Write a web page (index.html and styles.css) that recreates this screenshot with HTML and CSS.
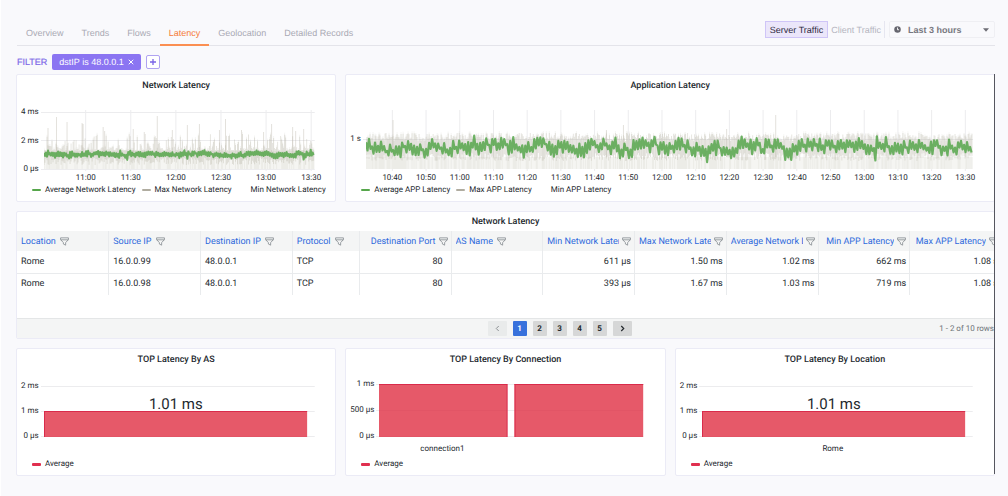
FILE: index.html
```html
<!DOCTYPE html>
<html lang="en">
<head>
<meta charset="utf-8">
<title>Latency</title>
<link rel="stylesheet" href="styles.css">
</head>
<body>
<svg class="defs" width="0" height="0" aria-hidden="true">
  <symbol id="funnel" viewBox="0 0 16 16"><path d="M1 1.500h14v3L10 10v4.500l-4-2V10L1 4.500zM1 5h14" fill="none" stroke="currentColor" stroke-width="1.500" stroke-linejoin="round"/></symbol>
</svg>
<header class="topbar">
  <nav class="tabs">
    <a href="#">Overview</a>
    <a href="#">Trends</a>
    <a href="#">Flows</a>
    <a href="#" class="active" aria-current="page">Latency</a>
    <a href="#">Geolocation</a>
    <a href="#">Detailed Records</a>
  </nav>
  <div class="controls">
    <button class="traffic selected">Server Traffic</button>
    <button class="traffic">Client Traffic</button>
    <div class="range">
      <svg class="clock" viewBox="0 0 14 14" aria-hidden="true"><circle cx="7" cy="7" r="6.500" fill="#66666f"/><path d="M7 3v4.500h3" fill="none" stroke="#fff" stroke-width="1.800"/></svg>
      <select aria-label="Time range"><option>Last 3 hours</option></select>
      <svg class="caret" viewBox="0 0 10 6" aria-hidden="true"><path d="M0 0h10L5 6z" fill="#6d6d75"/></svg>
    </div>
  </div>
</header>

<div class="filters">
  <span class="filter-title">FILTER</span>
  <button class="chip">dstIP is 48.0.0.1
    <svg viewBox="0 0 8 8" aria-hidden="true"><path d="M1 1l6 6M7 1L1 7" stroke="currentColor" stroke-width="1.300"/></svg>
  </button>
  <button class="add" aria-label="Add filter"><svg viewBox="0 0 8 8" aria-hidden="true"><path d="M4 1v6M1 4h6" stroke="currentColor" stroke-width="1.300"/></svg></button>
</div>

<main class="board">
  <section class="card">
    <h2>Network Latency</h2>
    <div class="chart">
      <div class="yaxis"><span>4 ms</span><span>2 ms</span><span>0 µs</span></div>
      <svg class="plot" id="network"></svg>
    </div>
    <div class="legend">
      <span class="key green">Average Network Latency</span>
      <span class="key grey">Max Network Latency</span>
      <span class="key">Min Network Latency</span>
    </div>
  </section>

  <section class="card wide">
    <h2>Application Latency</h2>
    <div class="chart">
      <div class="yaxis single"><span>1 s</span></div>
      <svg class="plot" id="application"></svg>
    </div>
    <div class="legend">
      <span class="key green">Average APP Latency</span>
      <span class="key grey">Max APP Latency</span>
      <span class="key">Min APP Latency</span>
    </div>
  </section>

  <section class="card full">
    <h2>Network Latency</h2>
    <div class="table-area">
    <table>
      <colgroup><col><col><col><col class="narrow"><col><col><col><col><col><col><col></colgroup>
      <thead>
        <tr>
          <th><div><span>Location</span><svg><use href="#funnel"/></svg></div></th>
          <th><div><span>Source IP</span><svg><use href="#funnel"/></svg></div></th>
          <th><div><span>Destination IP</span><svg><use href="#funnel"/></svg></div></th>
          <th><div><span>Protocol</span><svg><use href="#funnel"/></svg></div></th>
          <th class="num"><div><span>Destination Port</span><svg><use href="#funnel"/></svg></div></th>
          <th><div><span>AS Name</span><svg><use href="#funnel"/></svg></div></th>
          <th class="num"><div><span>Min Network Latency</span><svg><use href="#funnel"/></svg></div></th>
          <th class="num"><div><span>Max Network Latency</span><svg><use href="#funnel"/></svg></div></th>
          <th class="num"><div><span>Average Network Latency</span><svg><use href="#funnel"/></svg></div></th>
          <th class="num"><div><span>Min APP Latency</span><svg><use href="#funnel"/></svg></div></th>
          <th class="num"><div><span>Max APP Latency</span><svg><use href="#funnel"/></svg></div></th>
        </tr>
      </thead>
      <tbody>
        <tr><td>Rome</td><td>16.0.0.99</td><td>48.0.0.1</td><td>TCP</td><td class="num port">80</td><td></td><td class="num">611 µs</td><td class="num">1.50 ms</td><td class="num">1.02 ms</td><td class="num">662 ms</td><td class="num">1.08 s</td></tr>
        <tr><td>Rome</td><td>16.0.0.98</td><td>48.0.0.1</td><td>TCP</td><td class="num port">80</td><td></td><td class="num">393 µs</td><td class="num">1.67 ms</td><td class="num">1.03 ms</td><td class="num">719 ms</td><td class="num">1.08 s</td></tr>
      </tbody>
    </table>
    </div>
    <footer class="pager">
      <div class="pages">
        <button class="step" disabled aria-label="Previous page"><svg viewBox="0 0 6 8"><path d="M4.500 1L1.500 4l3 3" fill="none" stroke="currentColor" stroke-width="1.200"/></svg></button>
        <button class="current">1</button>
        <button>2</button>
        <button>3</button>
        <button>4</button>
        <button>5</button>
        <button class="step" aria-label="Next page"><svg viewBox="0 0 6 8"><path d="M1.500 1l3 3-3 3" fill="none" stroke="currentColor" stroke-width="1.400"/></svg></button>
      </div>
      <span class="count">1 - 2 of 10 rows</span>
    </footer>
  </section>

  <section class="card">
    <h2>TOP Latency By AS</h2>
    <div class="chart">
      <div class="yaxis bars"><span>2 ms</span><span>1 ms</span><span>0 µs</span></div>
      <svg class="plot">
        <path class="grid" d="M-3 5.500H0M-3 30.500H0M-3 55.500H0"/>
        <rect class="gridbar" y="5" width="100%" height="1"/><rect class="gridbar" y="30" width="100%" height="1"/><rect class="gridbar" y="55" width="100%" height="1"/>
        <rect class="bar" y="30" width="97.2%" height="26"/><rect class="edge" y="30" width="97.2%" height="1"/><rect class="edge" y="30" width="1" height="26"/>
        <text class="value" x="48.7%" y="28">1.01 ms</text>
      </svg>
    </div>
    <div class="legend"><span class="key red">Average</span></div>
  </section>

  <section class="card">
    <h2>TOP Latency By Connection</h2>
    <div class="chart tall">
      <div class="yaxis"><span>1 ms</span><span>500 µs</span><span>0 µs</span></div>
      <svg class="plot">
        <path class="grid" d="M-3 5.500H0M-3 31.500H0M-3 57.500H0"/>
        <rect class="gridbar" y="5" width="100%" height="1"/><rect class="gridbar" y="31" width="100%" height="1"/><rect class="gridbar" y="57" width="100%" height="1"/>
        <rect class="bar" y="5" width="48.5%" height="53"/><rect class="edge" y="5" width="48.5%" height="1"/><rect class="edge" x="48.3%" y="5" width="1" height="53"/>
        <rect class="bar" x="51.3%" y="5" width="48.7%" height="53"/><rect class="edge" x="51.3%" y="5" width="48.7%" height="1"/><rect class="edge" x="51.3%" y="5" width="1" height="53"/>
        <text x="24%" y="72">connection1</text>
      </svg>
    </div>
    <div class="legend"><span class="key red">Average</span></div>
  </section>

  <section class="card">
    <h2>TOP Latency By Location</h2>
    <div class="chart">
      <div class="yaxis bars"><span>2 ms</span><span>1 ms</span><span>0 µs</span></div>
      <svg class="plot">
        <path class="grid" d="M-3 5.500H0M-3 30.500H0M-3 55.500H0"/>
        <rect class="gridbar" y="5" width="100%" height="1"/><rect class="gridbar" y="30" width="100%" height="1"/><rect class="gridbar" y="55" width="100%" height="1"/>
        <rect class="bar" y="30" width="97.2%" height="26"/><rect class="edge" y="30" width="97.2%" height="1"/><rect class="edge" y="30" width="1" height="26"/>
        <text class="value" x="48.7%" y="28">1.01 ms</text>
        <text x="48.3%" y="70">Rome</text>
      </svg>
    </div>
    <div class="legend"><span class="key red">Average</span></div>
  </section>
</main>
<script src="charts.js"></script>
</body>
</html>
```
FILE: styles.css
```css
* { box-sizing: border-box; }
body {
  margin: 0;
  padding: 21px 13px 20px 15px;
  border-left: 1px solid #fff;
  background: #f9f9fc;
  font-family: "Liberation Sans", Arial, sans-serif;
  font-size: 9px;
  color: #24292e;
  text-rendering: geometricPrecision;
}
button, select { font: inherit; color: inherit; margin: 0; padding: 0; text-rendering: inherit; }
.defs { position: absolute; }

.topbar {
  display: flex;
  justify-content: space-between;
  align-items: flex-start;
  height: 25px;
  margin-left: 1px;
  border-bottom: 1px solid #e4e4ea;
}
.tabs { display: flex; height: 25px; }
.tabs a {
  padding: 0 9px;
  line-height: 24px;
  color: #a9a9b4;
  text-decoration: none;
  border-bottom: 1px solid transparent;
}
.tabs a.active { color: #f57c3a; border-bottom: 2px solid #fb8f52; }
.controls { display: flex; height: 17px; }
.traffic {
  border: 1px solid transparent;
  background: none;
  padding: 0 2px;
  color: #b5b5bf;
}
.traffic.selected { padding: 0 4px; background: #ebe6fa; border-color: #cfc5f7; color: #2b2840; }
.range {
  display: flex;
  align-items: center;
  position: relative;
  width: 106px;
  margin-left: 5px;
  border: 1px solid #efeff3;
  border-radius: 2px;
}
.range::before {
  content: "";
  position: absolute;
  left: -6px;
  width: 1px;
  height: 17px;
  background: #e6e6f0;
}
.clock { width: 7px; height: 7px; margin: 0 7px 0 4px; }
.range select {
  flex: 1;
  appearance: none;
  border: 0;
  background: none;
  font-weight: bold;
  color: #77777f;
}
.caret { width: 6px; height: 4px; margin-right: 5px; }

.filters { display: flex; align-items: center; height: 28px; gap: 5px; padding: 3px 0 0 1px; }
.filter-title { color: #8069e8; -webkit-text-stroke: 0.2px #8069e8; }
.chip {
  display: flex;
  align-items: center;
  gap: 4px;
  height: 16px;
  padding: 0 7px;
  border: 0;
  border-radius: 2px;
  background: #8b75f2;
  color: #fff;
}
.chip svg { width: 6px; height: 6px; }
.add {
  display: flex;
  align-items: center;
  justify-content: center;
  width: 14px;
  height: 14px;
  border: 1px solid #b0a3f2;
  border-radius: 2px;
  background: #fff;
  color: #7a64e6;
}
.add svg { width: 8px; height: 8px; }

.board {
  display: grid;
  grid-template-columns: repeat(3, minmax(0, 1fr));
  gap: 9px;
  position: relative;
  font-family: Roboto, sans-serif;
}
.board::after {
  content: "";
  position: absolute;
  top: 0;
  right: 0;
  bottom: 2px;
  width: 1px;
  background: #55565f;
}
.card {
  display: flex;
  flex-direction: column;
  min-width: 0;
  overflow: hidden;
  background: #fff;
  border: 1px solid #ebebf6;
  border-radius: 2px;
}
.wide { grid-column: span 2; }
.full { grid-column: 1 / -1; }
h2 { margin: 0; font-size: 9px; font-weight: 500; line-height: 22px; text-align: center; }
.full h2 { line-height: 17px; padding-top: 2px; }

.chart { display: flex; padding: 10px 21px 0 0; height: 88px; }
.chart.tall { padding-top: 8px; }
.yaxis {
  display: flex;
  flex-direction: column;
  justify-content: space-between;
  align-items: flex-end;
  height: 67px;
  padding: 0 5px 0 4px;
  font-size: 8px;
  line-height: 10px;
  white-space: nowrap;
}
.yaxis.single { height: 64px; justify-content: center; }
.yaxis.bars { height: 60px; }
.tall .yaxis { height: 62px; }
.plot { flex: 1; min-width: 0; height: 100%; overflow: visible; }
.plot text { font-size: 8px; fill: #24292e; text-anchor: middle; }
.plot .value { font-size: 15px; }
.grid { stroke: #ececee; fill: none; }
.gridbar { fill: #ececee; }
.bar { fill: #e02f44; fill-opacity: 0.8; }
.edge { fill: #d92b4b; }
.area { fill: #f5f5f2; }
.max { stroke: #b9b5a8; fill: none; }
.avg { stroke: #56a64b; fill: none; stroke-opacity: 0.85; stroke-linejoin: round; }

.legend {
  display: flex;
  gap: 6px;
  padding: 0 0 6px 15px;
  font-size: 8px;
  line-height: 10px;
  white-space: nowrap;
}
.key { display: flex; align-items: center; gap: 4px; }
.key::before { content: ""; width: 9px; height: 2px; border-radius: 1px; }
.green::before { background: #56a64b; }
.grey::before { background: #b0aca0; }
.red::before { background: #e02f4f; height: 3px; }

.table-area { height: 87px; overflow: hidden; }
table { table-layout: fixed; width: 985px; min-width: 100%; border-collapse: collapse; }
.narrow { width: 67px; }
th, td { padding: 0 3px 0 4px; border-right: 1px solid #e9ebed; text-align: left; white-space: nowrap; }
th { height: 20px; padding-top: 1px; background: #f4f5f5; color: #2e69dc; font-weight: 400; }
td { height: 22px; border-bottom: 1px solid #e9ebed; }
tbody tr:last-child td { border-bottom: 0; }
th div { display: flex; align-items: center; gap: 4px; }
th span { overflow: hidden; }
th svg { flex: none; width: 9px; height: 9px; color: #8a8f94; }
.num { text-align: right; }
.num div { justify-content: flex-end; gap: 3px; }
td.port { padding-right: 8px; }

.pager {
  display: grid;
  grid-template-columns: 1fr auto 1fr;
  align-items: center;
  height: 20px;
  padding-left: 108px;
  background: #f4f5f5;
  border-top: 1px solid #e4e6e7;
}
.pages { display: flex; gap: 6px; grid-column: 2; }
.pages button {
  display: flex;
  align-items: center;
  justify-content: center;
  width: 14px;
  height: 15px;
  border: 0;
  border-radius: 1px;
  background: #d6d7d7;
  font-size: 8px;
  font-weight: 700;
}
.pages .step { width: 19px; }
.pages .step:disabled { background: #e9ebeb; color: #8d9194; }
.pages .current { background: #3871dc; color: #fff; }
.pages svg { width: 5px; height: 7px; }
.count { justify-self: end; font-size: 8px; color: #6d7277; }
```
FILE: charts.js
```js
function random(seed) {
  return function () {
    seed = (seed * 1664525 + 1013904223) % 4294967296;
    return seed / 4294967296;
  };
}

function ticks(first, step, labels) {
  return labels.map(function (label, i) {
    var x = first + step * i + "%";
    return '<line class="grid" x1="' + x + '" x2="' + x + '" y1="3" y2="64"/>' +
      '<text x="' + x + '" y="73">' + label + "</text>";
  }).join("");
}

function hline(y) {
  return '<path class="grid" d="M-3 ' + (y + 0.5) + 'H0"/><rect class="gridbar" y="' + y + '" width="100%" height="1"/>';
}

function series(o) {
  var rnd = random(o.seed), strokes = "", faint = "", avg = "", drift = 0;
  for (var x = 0; x < o.width; x += 1) {
    var r = rnd();
    var top = o.maxTop - Math.pow(r, o.tail) * o.maxRange;
    strokes += "M" + x + " " + top.toFixed(1) + "V" + (o.maxBottom + rnd() * 8).toFixed(1);
    if (rnd() > 0.5) faint += "M" + x + " " + (top - 2).toFixed(1) + "V62";
  }
  var spikes = o.spikes.map(function (s) { return "M" + s[0] + " " + s[1] + "V50"; }).join("");
  for (x = 0; x < o.width; x += o.step) {
    drift = drift * 0.3 + (rnd() - 0.5) * o.drift;
    var up = o.amp * (0.4 + rnd() * 0.6), down = o.amp * (0.3 + rnd() * 0.7);
    if (rnd() > 0.92) up *= o.burst;
    if (rnd() > 0.92) down *= o.burst;
    avg += (x ? "L" : "M") + x.toFixed(1) + " " + (o.mid + drift - up).toFixed(1) +
      "L" + (x + o.step / 2).toFixed(1) + " " + (o.mid + drift + down).toFixed(1);
  }
  return '<svg width="100%" height="67" viewBox="0 0 ' + o.width + ' 67" preserveAspectRatio="none">' +
    '<rect class="area" y="' + o.areaTop + '" width="' + o.width + '" height="' + (62 - o.areaTop) + '"/>' +
    '<path class="max" stroke-opacity="0.14" d="' + faint + '"/>' +
    '<path class="max" stroke-opacity="0.34" d="' + strokes + '"/>' +
    '<path class="max" stroke-opacity="0.4" d="' + spikes + '"/>' +
    '<path class="avg" stroke-width="' + o.line + '" d="' + avg + '"/></svg>';
}

document.getElementById("network").innerHTML =
  hline(5) + hline(33) + hline(62) +
  ticks(15.4, 16.66, ["11:00", "11:30", "12:00", "12:30", "13:00", "13:30"]) +
  series({
    seed: 41, width: 270, maxTop: 43, maxRange: 16, tail: 3, maxBottom: 50, areaTop: 44,
    mid: 47.5, drift: 3.2, amp: 2.4, burst: 2, step: 2, line: 2,
    spikes: [[4, 21], [12.5, 10], [23, 15], [38, 16], [39, 17], [59, 20], [60.5, 24], [89, 22], [100, 25],
      [113, 9], [128, 23], [143, 18], [155, 17], [175, 23], [181, 12], [197, 23], [219, 25], [227, 17],
      [248, 20], [251, 24], [259, 22]]
  });

var times = [];
for (var m = 640; m <= 810; m += 10) {
  times.push(Math.floor(m / 60) + ":" + String(m % 60).padStart(2, "0"));
}
document.getElementById("application").innerHTML =
  hline(32) +
  ticks(4.34, 5.552, times) +
  series({
    seed: 77, width: 606, maxTop: 34, maxRange: 8, tail: 1, maxBottom: 46, areaTop: 50,
    mid: 40.5, drift: 10, amp: 5.6, burst: 1.8, step: 3, line: 2.2,
    spikes: [[27, 13], [257, 18], [240, 23], [360, 22], [409, 8]]
  });
```
